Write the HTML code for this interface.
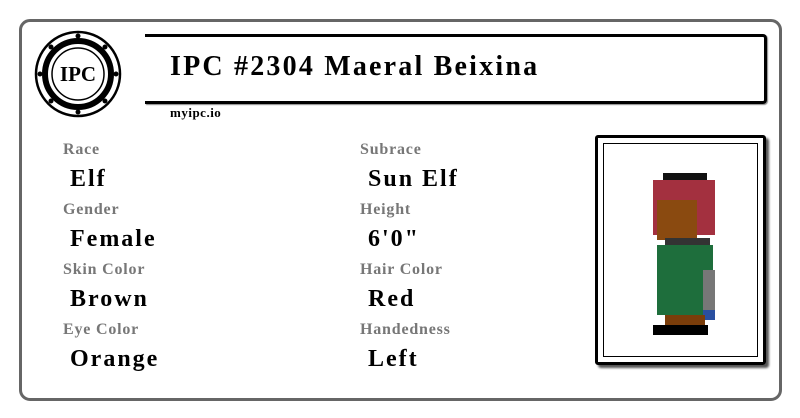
<!DOCTYPE html>
<html><head><style>
body{margin:0;width:800px;height:418px;background:#fff;position:relative;overflow:hidden;font-family:"Liberation Serif",serif}
.card{position:absolute;left:19px;top:19px;width:757px;height:376px;border:3px solid #666;border-radius:11px}
.tb{position:absolute;left:145px;top:34px;width:619px;height:64px;border:3px solid #000;border-left:none;border-radius:0 4px 4px 0;box-shadow:1px 1px 1px #888}
.title{position:absolute;left:170px;top:51px;font-size:28px;font-weight:bold;letter-spacing:2.2px}
.site{position:absolute;left:170px;top:105px;font-size:13px;font-weight:bold;letter-spacing:0.5px}
.l{position:absolute;font-size:16px;color:#777;font-weight:bold;letter-spacing:0.8px}
.v{position:absolute;font-size:24px;font-weight:bold;color:#000;letter-spacing:2px}
.pf{position:absolute;left:595px;top:135px;width:165px;height:224px;border:3px solid #000;border-radius:3px;box-shadow:3px 3px 2px #555}
.pi{position:absolute;left:5px;top:5px;right:5px;bottom:5px;border:1.5px solid #000}
</style></head><body>
<div class="card"></div>
<div class="tb"></div>
<svg style="position:absolute;left:33px;top:30px" width="90" height="90" viewBox="0 0 90 90">
<circle cx="45" cy="44" r="42" fill="#fff" stroke="#000" stroke-width="2.5"/>
<circle cx="45" cy="44" r="33" fill="none" stroke="#000" stroke-width="6"/>
<circle cx="45" cy="44" r="26" fill="#fff" stroke="#000" stroke-width="1.5"/>
<g fill="#000"><circle cx="45" cy="6" r="2.5"/><circle cx="45" cy="82" r="2.5"/><circle cx="7" cy="44" r="2.5"/><circle cx="83" cy="44" r="2.5"/><circle cx="18" cy="17" r="2.5"/><circle cx="72" cy="17" r="2.5"/><circle cx="18" cy="71" r="2.5"/><circle cx="72" cy="71" r="2.5"/></g>
<text x="45" y="51" text-anchor="middle" font-family="Liberation Serif" font-size="21" font-weight="bold">IPC</text>
</svg>
<div class="title">IPC #2304 Maeral Beixina</div>
<div class="site">myipc.io</div>
<div class="l" style="left:63px;top:141px">Race</div><div class="v" style="left:70px;top:166px">Elf</div>
<div class="l" style="left:63px;top:201px">Gender</div><div class="v" style="left:70px;top:226px">Female</div>
<div class="l" style="left:63px;top:261px">Skin Color</div><div class="v" style="left:70px;top:286px">Brown</div>
<div class="l" style="left:63px;top:321px">Eye Color</div><div class="v" style="left:70px;top:346px">Orange</div>
<div class="l" style="left:360px;top:141px">Subrace</div><div class="v" style="left:368px;top:166px">Sun Elf</div>
<div class="l" style="left:360px;top:201px">Height</div><div class="v" style="left:368px;top:226px">6'0"</div>
<div class="l" style="left:360px;top:261px">Hair Color</div><div class="v" style="left:368px;top:286px">Red</div>
<div class="l" style="left:360px;top:321px">Handedness</div><div class="v" style="left:368px;top:346px">Left</div>
<div class="pf"><div class="pi"></div></div>
<svg style="position:absolute;left:645px;top:170px" width="75" height="172" viewBox="0 0 75 172">
<rect x="18" y="3" width="44" height="10" fill="#111"/>
<rect x="8" y="10" width="62" height="55" fill="#a3303f"/>
<rect x="12" y="30" width="40" height="40" fill="#8a4a10"/>
<rect x="20" y="68" width="45" height="8" fill="#333"/>
<rect x="12" y="75" width="56" height="70" fill="#1e6e3c"/>
<rect x="58" y="100" width="12" height="50" fill="#777"/>
<rect x="58" y="140" width="12" height="10" fill="#2a4fa0"/>
<rect x="20" y="145" width="40" height="15" fill="#7a3d0a"/>
<rect x="8" y="155" width="55" height="10" fill="#000"/>
</svg>
</body></html>
